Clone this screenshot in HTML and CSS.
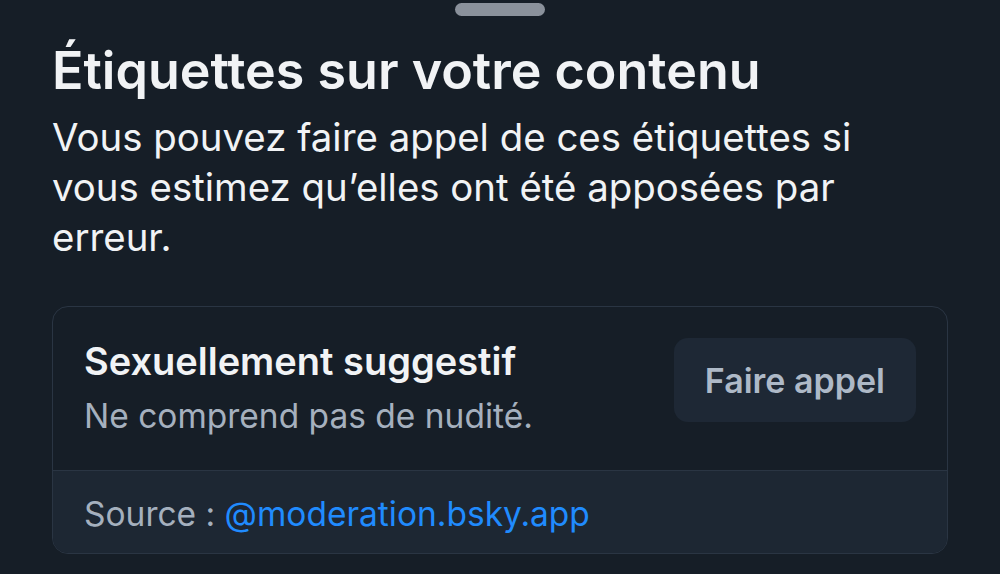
FILE: index.html
```html
<!DOCTYPE html>
<html lang="fr">
<head>
  <meta charset="UTF-8">
  <meta name="viewport" content="width=device-width, initial-scale=1.0">
  <title>Étiquettes sur votre contenu</title>
  <link rel="stylesheet" href="styles.css">
</head>
<body>
  <div class="sheet">
    <div class="handle"></div>
    <h1>Étiquettes sur votre contenu</h1>
    <p class="intro">Vous pouvez faire appel de ces étiquettes si vous estimez qu’elles ont été apposées par erreur.</p>

    <div class="label-card">
      <div class="label-main">
        <div class="label-text">
          <div class="label-name">Sexuellement suggestif</div>
          <div class="label-desc">Ne comprend pas de nudité.</div>
        </div>
        <button type="button" class="appeal-btn">Faire appel</button>
      </div>
      <div class="label-source">
        <span>Source : </span><a href="#">@moderation.bsky.app</a>
      </div>
    </div>
  </div>
</body>
</html>
```

FILE: styles.css
```css
body {
  margin: 0;
  padding: 0;
  background-color: #161e27;
  font-family: Inter, "Noto Sans", sans-serif;
  color: #f1f3f5;
}
.sheet {
  padding: 3px 52px 20px;
}
.handle {
  width: 90px;
  height: 13px;
  margin: 0 auto;
  border-radius: 7px;
  background-color: #8a919b;
}
h1 {
  margin: 24px 0 0;
  font-size: 52px;
  font-weight: 600;
  line-height: 62px;
}
.intro {
  margin: 10px 0 0;
  font-size: 38.4px;
  line-height: 50px;
  color: #f1f3f5;
  max-width: 870px;
}
.label-card {
  margin-top: 44px;
  border: 1px solid #2a3543;
  border-radius: 16px;
  overflow: hidden;
}
.label-main {
  display: flex;
  align-items: flex-start;
  justify-content: space-between;
  padding: 31px 31px 33px 31px;
  border-bottom: 1px solid #2a3543;
}
.label-name {
  font-size: 38px;
  font-weight: 600;
  line-height: 46px;
}
.label-desc {
  margin-top: 11px;
  font-size: 33.5px;
  line-height: 42px;
  color: #a5b0be;
}
.appeal-btn {
  font-family: inherit;
  font-size: 34px;
  font-weight: 600;
  color: #aeb9c7;
  background-color: #1e2835;
  border: none;
  border-radius: 14px;
  padding: 0 31px;
  height: 84px;
}
.label-source {
  background-color: #1d2733;
  padding: 22px 31px 18px;
  font-size: 33.5px;
  line-height: 42px;
  color: #a5b0be;
}
.label-source span {
  white-space: pre;
}
.label-source a {
  color: #208bfe;
  text-decoration: none;
}
```
